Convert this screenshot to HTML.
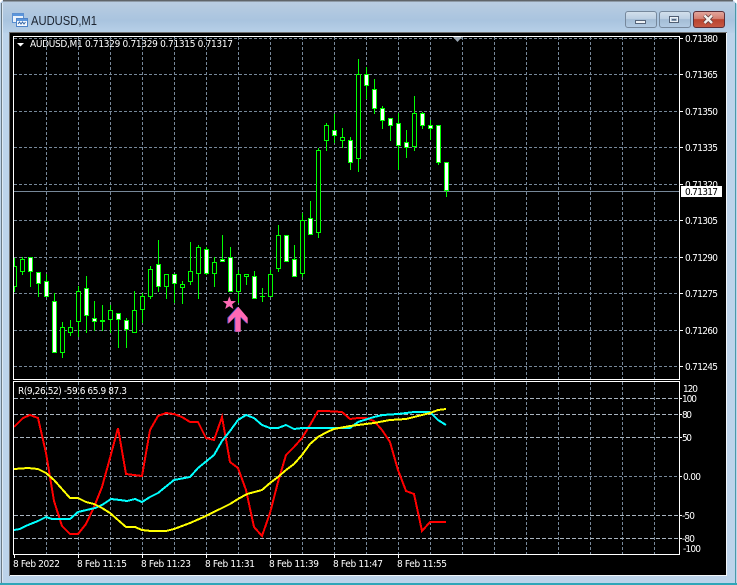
<!DOCTYPE html>
<html>
<head>
<meta charset="utf-8">
<title>AUDUSD,M1</title>
<style>
html,body{margin:0;padding:0;background:#bcd3ea;}
body{width:737px;height:585px;overflow:hidden;position:relative;}
svg{position:absolute;left:0;top:0;display:block;}
text{font-family:"DejaVu Sans Condensed","DejaVu Sans","Liberation Sans",sans-serif;font-stretch:condensed;font-size:10px;fill:#fff;}
</style>
</head>
<body>
<svg width="737" height="585" viewBox="0 0 737 585" xmlns="http://www.w3.org/2000/svg">
<defs>
<linearGradient id="fr" x1="0" y1="0" x2="0" y2="1"><stop offset="0" stop-color="#b9cde1"/><stop offset="0.6" stop-color="#a9c4df"/><stop offset="1" stop-color="#b8d0e8"/></linearGradient>
<linearGradient id="btn" x1="0" y1="0" x2="0" y2="1"><stop offset="0" stop-color="#d3e0ec"/><stop offset="0.45" stop-color="#bccfe2"/><stop offset="0.5" stop-color="#a3bcd5"/><stop offset="1" stop-color="#b3cbe3"/></linearGradient>
<linearGradient id="cls" x1="0" y1="0" x2="0" y2="1"><stop offset="0" stop-color="#e3a89f"/><stop offset="0.45" stop-color="#d58071"/><stop offset="0.5" stop-color="#b9432f"/><stop offset="1" stop-color="#c65a45"/></linearGradient>
</defs>

<!-- window frame -->
<rect width="737" height="585" fill="#bcd3ea"/>
<rect x="2" y="2" width="733" height="31" fill="url(#fr)"/>
<path d="M3 .5H733" stroke="#5f6468" fill="none"/>
<path d="M3 1.5H733" stroke="#8e9aa6" fill="none"/>
<path d="M1.5 3V583" stroke="#6b7a84" fill="none"/>
<path d="M2.5 3V582" stroke="#dce8f3" fill="none"/>
<path d="M735.5 3V583" stroke="#4a9aa8" fill="none"/>
<path d="M0 583.5H737M0 584.5H737" stroke="#2fa6b8" fill="none"/>
<path d="M0 0H3L0 3Z" fill="#ffffff"/>
<path d="M737 0H733L737 4Z" fill="#ffffff"/>

<!-- title icon -->
<g shape-rendering="crispEdges">
<rect x="12.5" y="13.5" width="11" height="9" fill="#eaf2fb" stroke="#5b8fd0"/>
<rect x="13" y="14" width="10" height="2" fill="#5b96dc"/>
<rect x="16.5" y="18.5" width="11" height="8" fill="#f4f8fd" stroke="#4f84c8"/>
<rect x="17" y="19" width="10" height="2" fill="#5b96dc"/>
</g>
<path d="M18 24l1.500-2 1.500 2 1.500-2 1.500 2 1.500-2" stroke="#3a6aa8" fill="none"/>

<text x="31" y="25" textLength="66" lengthAdjust="spacingAndGlyphs" style="font-family:'Liberation Sans',sans-serif;font-stretch:normal;font-size:12.500px;fill:#1c2430">AUDUSD,M1</text>

<!-- buttons -->
<rect x="625.500" y="11.500" width="31" height="16" rx="2.500" fill="url(#btn)" stroke="#76889c"/>
<rect x="659.500" y="11.500" width="31" height="16" rx="2.500" fill="url(#btn)" stroke="#76889c"/>
<rect x="693.500" y="11.500" width="31" height="16" rx="2.500" fill="url(#cls)" stroke="#5d2f38"/>
<rect x="635.500" y="20.500" width="10" height="3" fill="#eef2f6" stroke="#56657a"/>
<rect x="669.500" y="16.500" width="9" height="6" fill="none" stroke="#505f74" stroke-width="1"/>
<rect x="670.500" y="17.500" width="7" height="4" fill="none" stroke="#eef2f6" stroke-width="1"/>
<rect x="672" y="19" width="4" height="1.500" fill="#56657a"/>
<path d="M704.500 15.500L712 23M712 15.500L704.500 23" stroke="#5b3a3c" stroke-width="4" fill="none"/>
<path d="M704.500 15.500L712 23M712 15.500L704.500 23" stroke="#f4f1ee" stroke-width="2.400" fill="none"/>

<!-- client area -->
<rect x="9" y="32" width="718" height="544" fill="#6d6d6d"/>
<rect x="10" y="33" width="716" height="542" fill="#000"/>
<path d="M10 575.500H727M726.500 33V576" stroke="#f2f6fa" fill="none"/>

<g shape-rendering="crispEdges">
<!-- grid -->
<g stroke="#778899" fill="none" stroke-dasharray="3 2">
<path d="M46.500 37V379M78.500 37V379M110.500 37V379M142.500 37V379M174.500 37V379M206.500 37V379M238.500 37V379M270.500 37V379M302.500 37V379M334.500 37V379M366.500 37V379M398.500 37V379M430.500 37V379M462.500 37V379M494.500 37V379M526.500 37V379M558.500 37V379M590.500 37V379M622.500 37V379M654.500 37V379"/>
<path d="M14 38.500H679M14 74.500H679M14 111.500H679M14 147.500H679M14 184.500H679M14 220.500H679M14 257.500H679M14 293.500H679M14 330.500H679M14 366.500H679"/>
<path d="M46.500 382V554M78.500 382V554M110.500 382V554M142.500 382V554M174.500 382V554M206.500 382V554M238.500 382V554M270.500 382V554M302.500 382V554M334.500 382V554M366.500 382V554M398.500 382V554M430.500 382V554M462.500 382V554M494.500 382V554M526.500 382V554M558.500 382V554M590.500 382V554M622.500 382V554M654.500 382V554"/>
</g>
<g stroke="#a9b4bf" fill="none" stroke-dasharray="4 2">
<path d="M14 398.500H679M14 414.500H679M14 437.500H679M14 515.500H679M14 538.500H679"/>
</g>
<path d="M14 476.500H679" stroke="#778899" fill="none" stroke-dasharray="3 2"/>

<!-- bid line -->
<path d="M14 191.500H679" stroke="#778899" fill="none"/>

<!-- wicks -->
<path stroke="#00ff00" fill="none" d="M14.500 258V292M22.500 257V275M30.500 257V287M38.500 272V297M46.500 274V297M54.500 293V353M62.500 322V358M70.500 320V336M78.500 286V337M86.500 276V333M94.500 301V331M102.500 305V331M110.500 305V333M118.500 313V348M126.500 318V348M134.500 291V333M142.500 293V323M150.500 266V299M158.500 240V292M166.500 274V299M174.500 274V303M182.500 281V304M190.500 242V285M198.500 245V299M206.500 247V275M214.500 257V287M222.500 235V262M230.500 247V292M238.500 270V303M246.500 274V285M254.500 271V299M262.500 288V302M260 296.500H265M270.500 270V297M278.500 225V272M286.500 235V262M294.500 245V277M302.500 213V277M310.500 201V235M318.500 148V238M326.500 123V151M334.500 114V143M342.500 128V148M350.500 137V170M358.500 59V172M366.500 67V99M374.500 79V114M382.500 106V129M390.500 118V141M398.500 113V170M406.500 130V158M414.500 96V151M422.500 112V129M430.500 120V140M438.500 125V165M446.500 162V197"/>

<!-- hollow bodies -->
<g stroke="#00ff00" fill="#000">
<rect x="13.500" y="266.500" width="3" height="20"/>
<rect x="20.500" y="259.500" width="4" height="12"/>
<rect x="60.500" y="327.500" width="4" height="25"/>
<rect x="68.500" y="327.500" width="4" height="5"/>
<rect x="76.500" y="291.500" width="4" height="30"/>
<rect x="108.500" y="310.500" width="4" height="9"/>
<rect x="132.500" y="310.500" width="4" height="22"/>
<rect x="140.500" y="296.500" width="4" height="13"/>
<rect x="148.500" y="269.500" width="4" height="27"/>
<rect x="164.500" y="274.500" width="4" height="12"/>
<rect x="180.500" y="284.500" width="4" height="3"/>
<rect x="188.500" y="271.500" width="4" height="10"/>
<rect x="196.500" y="247.500" width="4" height="26"/>
<rect x="212.500" y="262.500" width="4" height="11"/>
<rect x="236.500" y="274.500" width="4" height="17"/>
<rect x="244.500" y="274.500" width="4" height="2"/>
<rect x="268.500" y="274.500" width="4" height="22"/>
<rect x="276.500" y="235.500" width="4" height="33"/>
<rect x="300.500" y="220.500" width="4" height="53"/>
<rect x="316.500" y="150.500" width="4" height="82"/>
<rect x="324.500" y="125.500" width="4" height="15"/>
<rect x="340.500" y="137.500" width="4" height="3"/>
<rect x="356.500" y="74.500" width="4" height="84"/>
<rect x="412.500" y="113.500" width="4" height="33"/>
</g>
<!-- filled bodies -->
<g stroke="#00ff00" fill="#fff">
<rect x="28.500" y="257.500" width="4" height="14"/>
<rect x="36.500" y="272.500" width="4" height="11"/>
<rect x="44.500" y="281.500" width="4" height="15"/>
<rect x="52.500" y="301.500" width="4" height="51"/>
<rect x="84.500" y="288.500" width="4" height="27"/>
<rect x="92.500" y="318.500" width="4" height="3"/>
<rect x="100.500" y="320.500" width="4" height="1"/>
<rect x="116.500" y="313.500" width="4" height="6"/>
<rect x="124.500" y="320.500" width="4" height="9"/>
<rect x="156.500" y="264.500" width="4" height="22"/>
<rect x="172.500" y="274.500" width="4" height="9"/>
<rect x="204.500" y="249.500" width="4" height="24"/>
<rect x="220.500" y="259.500" width="4" height="2"/>
<rect x="228.500" y="257.500" width="4" height="34"/>
<rect x="252.500" y="276.500" width="4" height="22"/>
<rect x="284.500" y="235.500" width="4" height="26"/>
<rect x="292.500" y="259.500" width="4" height="17"/>
<rect x="308.500" y="218.500" width="4" height="16"/>
<rect x="332.500" y="130.500" width="4" height="5"/>
<rect x="348.500" y="140.500" width="4" height="22"/>
<rect x="364.500" y="74.500" width="4" height="11"/>
<rect x="372.500" y="89.500" width="4" height="19"/>
<rect x="380.500" y="108.500" width="4" height="12"/>
<rect x="388.500" y="118.500" width="4" height="7"/>
<rect x="396.500" y="123.500" width="4" height="22"/>
<rect x="404.500" y="142.500" width="4" height="5"/>
<rect x="420.500" y="113.500" width="4" height="12"/>
<rect x="428.500" y="125.500" width="4" height="3"/>
<rect x="436.500" y="125.500" width="4" height="37"/>
<rect x="444.500" y="162.500" width="4" height="28"/>
</g>

<!-- indicator lines -->
<polyline fill="none" stroke="#ff0000" stroke-width="2" points="14,427 23,418 30,415 38,418 46,453 54,501 62,526 70,534 78,534 86,524 94,507 102,487 110,458 118,428 126,474 142,476 150,430 158,416 166,413 174,414 182,417 190,422 198,422 206,438 214,440 222,417 230,462 238,468 246,490 254,527 262,536 270,513 278,482 286,455 294,447 302,438 310,425 318,411 326,411 342,412 350,419 358,418 366,418 374,421 382,430 390,442 398,470 406,491 414,494 422,531 430,522 446,522"/>
<polyline fill="none" stroke="#00ffff" stroke-width="2" points="14,530 20,529 28,525 38,521 46,517 52,519 70,519 78,512 95,508 102,505 111,499 120,500 127,501 135,499 142,502 150,497 158,493 174,480 190,477 198,468 214,455 222,441 230,431 238,420 246,415 254,418 262,425 270,428 278,428 286,425 294,429 302,428 350,428 358,422 374,417 383,415 398,414 414,412 430,412 438,420 446,425"/>
<polyline fill="none" stroke="#ffff00" stroke-width="2" points="14,469 28,468 38,469 46,473 54,480 62,489 70,498 78,498 86,502 94,504 102,508 110,513 118,520 126,527 135,527 142,530 151,531 166,531 174,529 190,523 206,516 222,508 230,504 238,499 247,494 262,490 270,483 278,477 286,470 294,464 302,455 310,444 318,437 327,432 334,429 350,426 366,424 374,423 390,420 406,419 414,417 430,413 438,410 446,409"/>

<!-- frames -->
<g stroke="#fff" fill="none">
<path d="M13.500 36.500H679.500V379.500H13.500Z"/>
<path d="M13.500 381.500H679.500V554.500H13.500Z"/>
<path d="M680 38.500H683M680 74.500H683M680 111.500H683M680 147.500H683M680 184.500H683M680 220.500H683M680 257.500H683M680 293.500H683M680 330.500H683M680 366.500H683"/>
<path d="M680 398.500H682M680 414.500H682M680 437.500H682M680 476.500H682M680 515.500H682M680 538.500H682"/>
<path d="M14.500 555V558M78.500 555V558M142.500 555V558M206.500 555V558M270.500 555V558M334.500 555V558M398.500 555V558"/>
</g>
</g>

<!-- marker -->
<polygon points="453,37 462,37 457.500,42" fill="#9aa6b2"/>
<polygon points="229.300,296.300 231,301 236,301.100 232.100,304.200 233.400,309 229.300,306.200 225.200,309 226.500,304.200 222.600,301.100 227.600,301" fill="#ff69b4"/>
<polygon points="237.300,306.700 246.700,317.700 246.700,323.700 239.700,316.700 239.700,331.700 234.300,331.700 234.300,316.700 227.300,323.700 227.300,317.700" fill="#3f4fd0"/>
<polygon points="238.300,306.700 247.700,317.700 247.700,323.700 240.700,316.700 240.700,331.700 235.300,331.700 235.300,316.700 228.300,323.700 228.300,317.700" fill="#ff69b4"/>

<!-- legends -->
<polygon points="17,43 24,43 20.500,46.500" fill="#fff"/>
<text x="30" y="47" textLength="203" lengthAdjust="spacing">AUDUSD,M1  0.71329 0.71329 0.71315 0.71317</text>
<text x="18" y="394" textLength="109" lengthAdjust="spacing">R(9,26,52) -59.6 65.9 87.3</text>

<!-- price axis -->
<g>
<text x="685" y="42" textLength="33" lengthAdjust="spacing">0.71380</text>
<text x="685" y="78" textLength="33" lengthAdjust="spacing">0.71365</text>
<text x="685" y="115" textLength="33" lengthAdjust="spacing">0.71350</text>
<text x="685" y="151" textLength="33" lengthAdjust="spacing">0.71335</text>
<text x="685" y="188" textLength="33" lengthAdjust="spacing">0.71320</text>
<text x="685" y="224" textLength="33" lengthAdjust="spacing">0.71305</text>
<text x="685" y="261" textLength="33" lengthAdjust="spacing">0.71290</text>
<text x="685" y="297" textLength="33" lengthAdjust="spacing">0.71275</text>
<text x="685" y="334" textLength="33" lengthAdjust="spacing">0.71260</text>
<text x="685" y="370" textLength="33" lengthAdjust="spacing">0.71245</text>
</g>
<rect x="681" y="186" width="41" height="11" fill="#fff"/>
<text x="685" y="195" textLength="33" lengthAdjust="spacing" style="fill:#000">0.71317</text>

<!-- indicator axis -->
<text x="683" y="392" textLength="15" lengthAdjust="spacing">120</text>
<text x="682" y="402" textLength="15" lengthAdjust="spacing">100</text>
<text x="682" y="418" textLength="10" lengthAdjust="spacing">80</text>
<text x="682" y="441" textLength="10" lengthAdjust="spacing">50</text>
<text x="683" y="480" textLength="18" lengthAdjust="spacing">0.00</text>
<text x="682" y="519" textLength="13" lengthAdjust="spacing">-50</text>
<text x="682" y="542" textLength="13" lengthAdjust="spacing">-80</text>
<text x="683" y="552" textLength="18" lengthAdjust="spacing">-100</text>

<!-- time axis -->
<text x="13" y="567" textLength="47" lengthAdjust="spacing">8 Feb 2022</text>
<text x="77" y="567" textLength="50" lengthAdjust="spacing">8 Feb 11:15</text>
<text x="141" y="567" textLength="50" lengthAdjust="spacing">8 Feb 11:23</text>
<text x="205" y="567" textLength="50" lengthAdjust="spacing">8 Feb 11:31</text>
<text x="269" y="567" textLength="50" lengthAdjust="spacing">8 Feb 11:39</text>
<text x="333" y="567" textLength="50" lengthAdjust="spacing">8 Feb 11:47</text>
<text x="397" y="567" textLength="50" lengthAdjust="spacing">8 Feb 11:55</text>
</svg>
</body>
</html>
